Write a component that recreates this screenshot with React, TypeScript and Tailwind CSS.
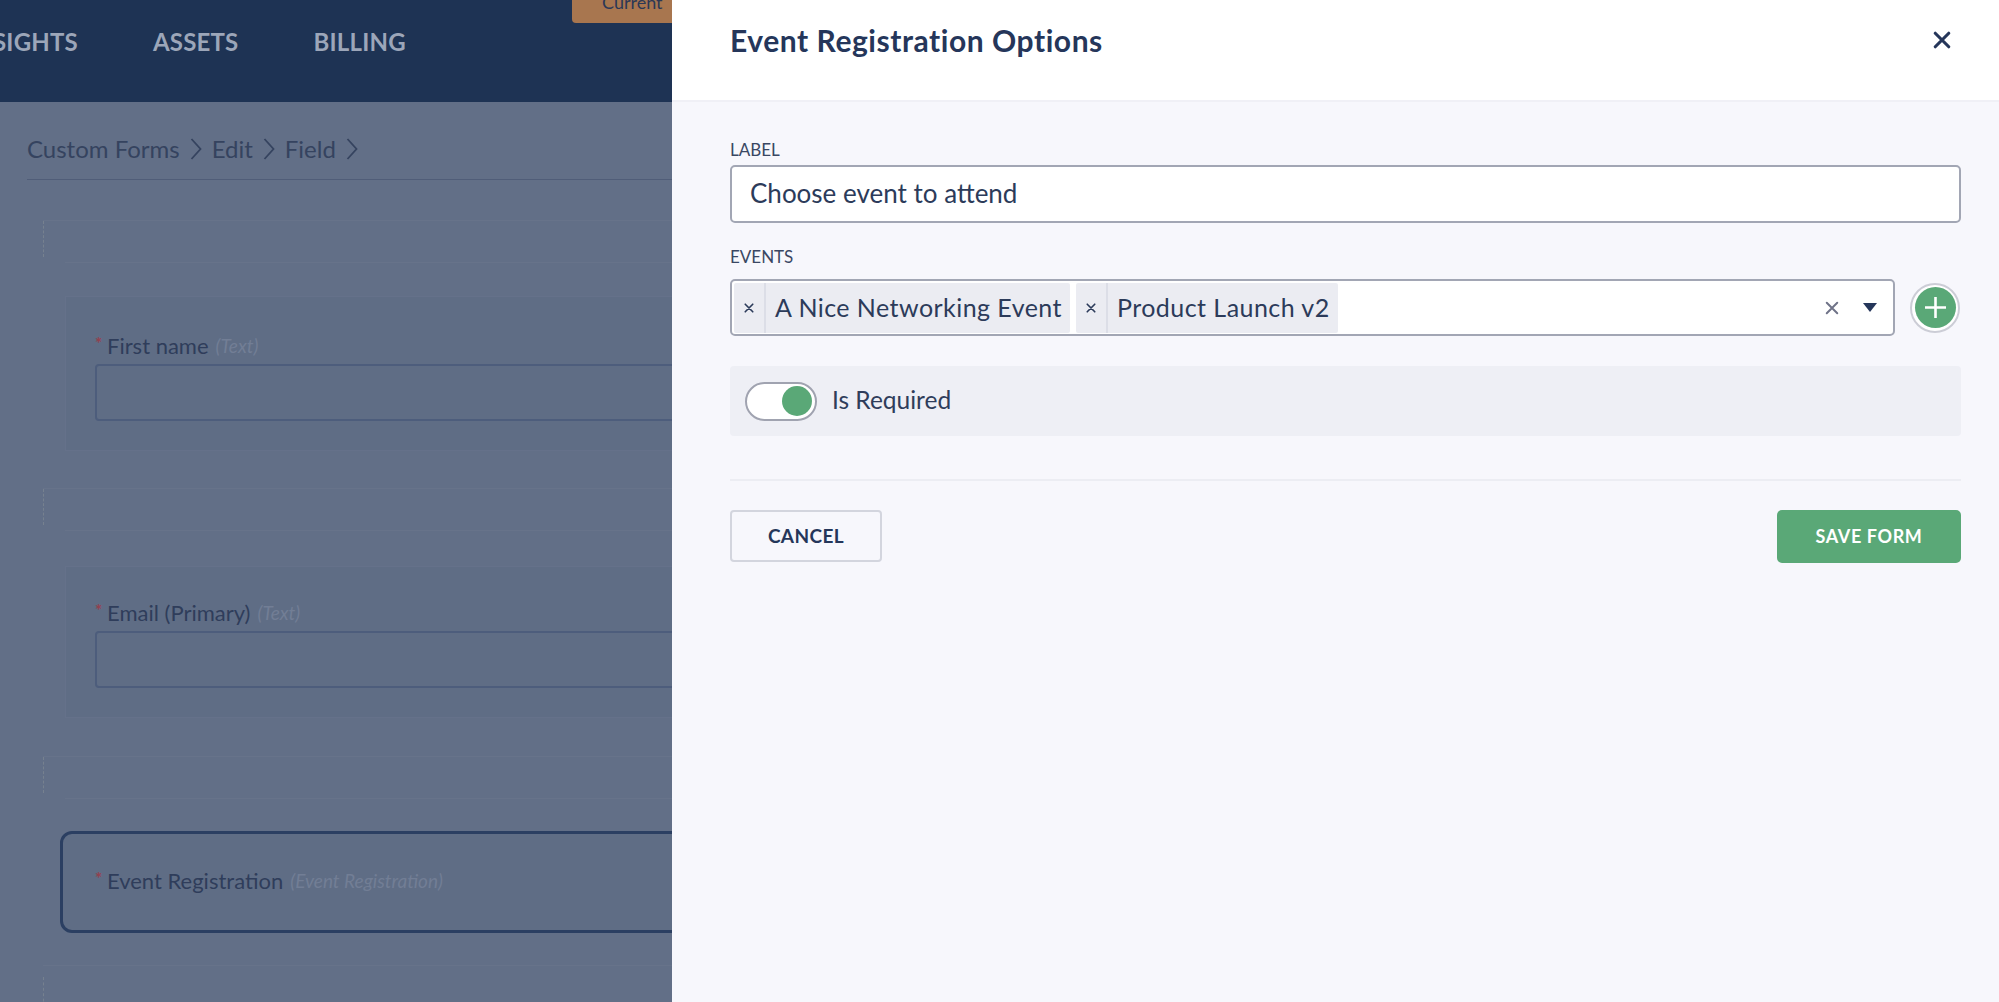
import React from "react";

const Chevron = () => (
  <svg width="12" height="26" viewBox="0 0 12 26" fill="none" stroke="#35435f" strokeWidth="1.8" className="shrink-0">
    <path d="M1.5 3 L10.5 13 L1.5 23" />
  </svg>
);

const SmallX = ({ size, color, width }: { size: number; color: string; width: number }) => (
  <svg width={size} height={size} viewBox="0 0 12 12" fill="none" stroke={color} strokeWidth={width} strokeLinecap="round">
    <path d="M1.5 1.5 L10.5 10.5 M10.5 1.5 L1.5 10.5" />
  </svg>
);

const DropZone = ({ className }: { className: string }) => (
  <div className={`relative h-[43px] w-[1200px] border-t border-[#67738a] ${className}`}>
    <div className="h-[36px] w-[22px] border-l border-dashed border-[#76818f]" />
    <div className="absolute bottom-0 left-[22px] right-0 border-b border-[#67738a]" />
  </div>
);

const FieldLabel = ({ name, type }: { name: string; type: string }) => (
  <div className="flex h-[24px] items-center text-[22px] leading-[24px] text-[#2f3d5b]">
    <span className="mb-[6px] w-[12px] text-[17px] leading-none font-bold text-[#94404f]">*</span>
    <span>{name}</span>
    <span className="ml-[7px] text-[19px] italic text-[#727e95]">{type}</span>
  </div>
);

const FieldCard = ({ name, type, className }: { name: string; type: string; className: string }) => (
  <div className={`ml-[22px] w-[1200px] border border-[#65718a] bg-[#5f6d85] pb-[29px] pl-[29px] ${className}`}>
    <FieldLabel name={name} type={type} />
    <div className="mt-[6px] h-[57px] rounded-[4px] border-2 border-[#4d5d7c]" />
  </div>
);

const Chip = ({ label, className }: { label: string; className: string }) => (
  <div className={`flex h-[50px] items-stretch rounded-[2px] bg-[#ebecf2] ${className}`}>
    <div className="flex w-[32px] items-center justify-center border-r-2 border-[#dcdee7]">
      <SmallX size={10} color="#2c3b5a" width={2} />
    </div>
    <div className="flex items-center pr-[8px] pl-[9px] text-[25px] tracking-[0.45px] text-[#2c3b5a]">{label}</div>
  </div>
);

export default function App() {
  return (
    <div className="flex h-[1002px] w-[1999px] overflow-hidden bg-[#f7f7fc] font-[Lato,sans-serif]">
      <div className="h-full w-[672px] shrink-0 overflow-hidden bg-[#626f87]">
        <header className="relative flex h-[102px] items-center bg-[#1e3354] pb-[18px]">
          <nav className="-ml-[33px] flex gap-[75px] text-[24px] font-bold tracking-[0.2px] text-[#9ca6b9]">
            <span>INSIGHTS</span>
            <span>ASSETS</span>
            <span>BILLING</span>
          </nav>
          <div className="absolute top-0 right-0 flex h-[23px] w-[100px] items-end overflow-hidden rounded-bl-[4px] bg-[#a8764f] pb-[12px] pl-[30px] text-[18px] leading-none text-[#2b3856]">
            Current
          </div>
        </header>

        <div className="ml-[27px] flex h-[78px] w-[1200px] items-center gap-[10px] border-b border-[#505d78] pt-[16px] text-[24px] text-[#35435f]">
          <span>Custom Forms</span>
          <Chevron />
          <span>Edit</span>
          <Chevron />
          <span>Field</span>
          <Chevron />
        </div>

        <div className="ml-[43px]">
          <DropZone className="mt-[40px]" />
          <FieldCard name="First name" type="(Text)" className="mt-[33px] pt-[37px]" />
          <DropZone className="mt-[37px]" />
          <FieldCard name="Email (Primary)" type="(Text)" className="mt-[35px] pt-[34px]" />
          <DropZone className="mt-[38px]" />
          <div className="mt-[32px] ml-[17px] flex h-[102px] w-[1200px] items-center rounded-[12px] border-[3px] border-[#2b3f62] bg-[#5f6d85] pb-[2px] pl-[32px]">
            <FieldLabel name="Event Registration" type="(Event Registration)" />
          </div>
          <div className="mt-[32px] w-[1200px] border-t border-[#67738a]">
            <div className="mt-[11px] h-[30px] border-l border-dashed border-[#76818f]" />
          </div>
        </div>
      </div>

      <div className="flex h-full min-w-0 flex-1 flex-col">
        <div className="flex h-[102px] items-center justify-between border-b-2 border-[#f0f0f6] bg-white pr-[48px] pb-[20px] pl-[58px]">
          <h1 className="text-[30px] font-bold tracking-[0.55px] text-[#25365a]">Event Registration Options</h1>
          <SmallX size={18} color="#25365a" width={2.1} />
        </div>

        <div className="flex flex-col pt-[38px] pr-[38px] pl-[58px]">
          <label className="h-[20px] text-[17px] leading-[20px] text-[#3a4763]">LABEL</label>
          <input
            readOnly
            value="Choose event to attend"
            className="mt-[5px] h-[58px] w-full rounded-[5px] border-2 border-[#a2a6b4] bg-white px-[18px] pb-[2px] text-[26px] text-[#2c3b5a] outline-none"
          />

          <label className="mt-[24px] h-[20px] text-[17px] leading-[20px] text-[#3a4763]">EVENTS</label>
          <div className="mt-[12px] flex items-center gap-[15px]">
            <div className="flex h-[57px] flex-1 items-center rounded-[5px] border-2 border-[#a2a6b4] bg-white pr-[16px] pl-[2px]">
              <Chip label="A Nice Networking Event" className="" />
              <Chip label="Product Launch v2" className="ml-[6px]" />
              <div className="ml-auto flex items-center gap-[24px]">
                <SmallX size={14} color="#6f7388" width={1.7} />
                <svg width="14" height="9" viewBox="0 0 14 9" fill="#25365a">
                  <path d="M0 0 H14 L7 9 Z" />
                </svg>
              </div>
            </div>
            <div className="mr-[1px] flex h-[50px] w-[50px] items-center justify-center rounded-full border-2 border-[#cccdd6] bg-white">
              <div className="flex h-[41px] w-[41px] items-center justify-center rounded-full bg-[#5aa877]">
                <svg width="23" height="23" viewBox="0 0 23 23" stroke="#fff" strokeWidth="2.6">
                  <path d="M11.5 1 V22 M1 11.5 H22" />
                </svg>
              </div>
            </div>
          </div>

          <div className="mt-[30px] flex h-[70px] items-center gap-[15px] rounded-[4px] bg-[#eeeff5] pl-[15px]">
            <div className="flex h-[39px] w-[72px] items-center justify-end rounded-full border-2 border-[#a0a3b0] bg-white pr-[3px]">
              <div className="h-[30px] w-[30px] rounded-full bg-[#5aa877]" />
            </div>
            <span className="mb-[2px] text-[24.5px] text-[#2f3d5b]">Is Required</span>
          </div>

          <div className="mt-[43px] h-[2px] bg-[#ecedf3]" />

          <div className="mt-[29px] flex justify-between">
            <button className="h-[52px] w-[152px] rounded-[4px] border-2 border-[#d3d5de] text-[19px] font-bold tracking-[0.4px] text-[#25365a]">
              CANCEL
            </button>
            <button className="h-[53px] w-[184px] rounded-[5px] bg-[#5aa877] text-[18px] font-bold tracking-[0.6px] text-white">
              SAVE FORM
            </button>
          </div>
        </div>
      </div>
    </div>
  );
}
